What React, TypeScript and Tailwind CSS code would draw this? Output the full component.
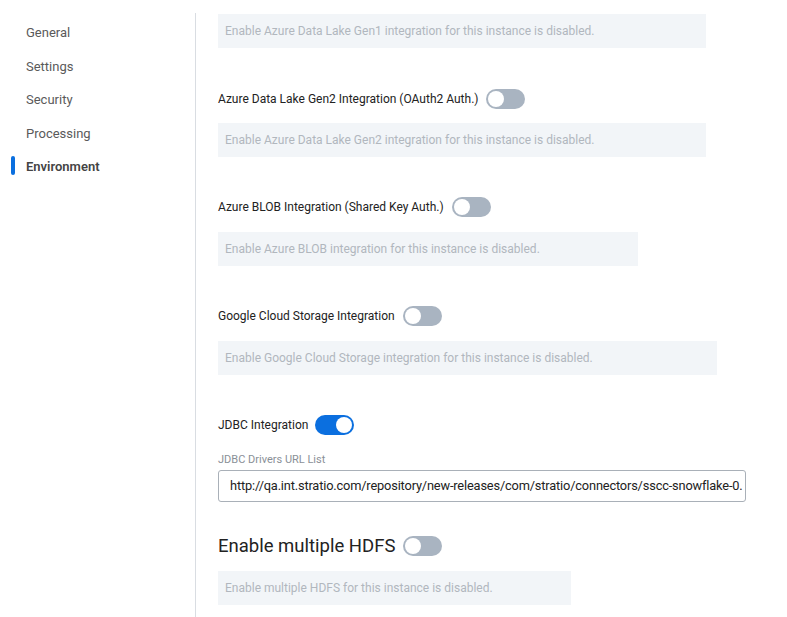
import React from "react";

function Toggle({ on }: { on?: boolean }) {
  return (
    <div
      className={
        "relative h-[20px] w-[39px] shrink-0 rounded-full " +
        (on ? "bg-[#0b6fdf]" : "bg-[#a9b4c1]")
      }
    >
      <div
        className={
          "absolute top-[2px] h-[16px] w-[16px] rounded-full bg-white " +
          (on ? "right-[2px]" : "left-[2px]")
        }
      />
    </div>
  );
}

function InfoBox({ text, w }: { text: string; w: string }) {
  return (
    <div className={"flex h-[34px] items-center bg-[#f2f5f8] pl-[7px] text-[12px] text-[#b1b7be] " + w}>
      {text}
    </div>
  );
}

function Row({ label }: { label: string }) {
  return (
    <div className="flex h-[20px] items-center gap-[8px]">
      <span className="text-[12px] text-[#222]">{label}</span>
      <Toggle />
    </div>
  );
}

export default function App() {
  const nav = ["General", "Settings", "Security", "Processing", "Environment"];
  return (
    <div
      className="flex min-h-[617px] w-[787px] bg-white"
      style={{ fontFamily: "Roboto, 'Liberation Sans', sans-serif" }}
    >
      <div className="mt-[13px] w-[196px] shrink-0 border-r border-[#d9dde2] pt-[3px]">
        {nav.map((n, i) => {
          const active = i === nav.length - 1;
          return (
            <div key={n} className="relative flex h-[33.5px] items-center pl-[26px]">
              {active && (
                <div className="absolute left-[11px] top-[6px] h-[19px] w-[4px] rounded-full bg-[#0b6fdf]" />
              )}
              <span
                className={
                  "text-[13px] " + (active ? "font-semibold text-[#444]" : "text-[#5a5a5a]")
                }
              >
                {n}
              </span>
            </div>
          );
        })}
      </div>
      <div className="flex flex-col pl-[22px] pt-[14px]">
        <InfoBox w="w-[488px]" text="Enable Azure Data Lake Gen1 integration for this instance is disabled." />
        <div className="mt-[41px]">
          <Row label="Azure Data Lake Gen2 Integration (OAuth2 Auth.)" />
        </div>
        <div className="mt-[14px]">
          <InfoBox w="w-[488px]" text="Enable Azure Data Lake Gen2 integration for this instance is disabled." />
        </div>
        <div className="mt-[40px]">
          <Row label="Azure BLOB Integration (Shared Key Auth.)" />
        </div>
        <div className="mt-[15px]">
          <InfoBox w="w-[420px]" text="Enable Azure BLOB integration for this instance is disabled." />
        </div>
        <div className="mt-[40px]">
          <Row label="Google Cloud Storage Integration" />
        </div>
        <div className="mt-[15px]">
          <InfoBox w="w-[499px]" text="Enable Google Cloud Storage integration for this instance is disabled." />
        </div>
        <div className="mt-[40px] flex h-[20px] items-center gap-[7px]">
          <span className="text-[12px] text-[#222]">JDBC Integration</span>
          <Toggle on />
        </div>
        <div className="mt-[18px] text-[11px] leading-[14px] text-[#8a9097]">JDBC Drivers URL List</div>
        <div className="mt-[3px] flex h-[32px] w-[528px] items-center overflow-hidden whitespace-nowrap rounded-[3px] border border-[#a9b0b8] pl-[11px] text-[12.8px] tracking-[-0.16px] text-[#222]">
          http://qa.int.stratio.com/repository/new-releases/com/stratio/connectors/sscc-snowflake-0.
        </div>
        <div className="mt-[34px] flex h-[20px] items-center gap-[8px]">
          <span className="text-[18.5px] leading-[20px] text-[#222]">Enable multiple HDFS</span>
          <Toggle />
        </div>
        <div className="mt-[15px]">
          <InfoBox w="w-[353px]" text="Enable multiple HDFS for this instance is disabled." />
        </div>
        <div className="h-[12px]" />
      </div>
    </div>
  );
}
